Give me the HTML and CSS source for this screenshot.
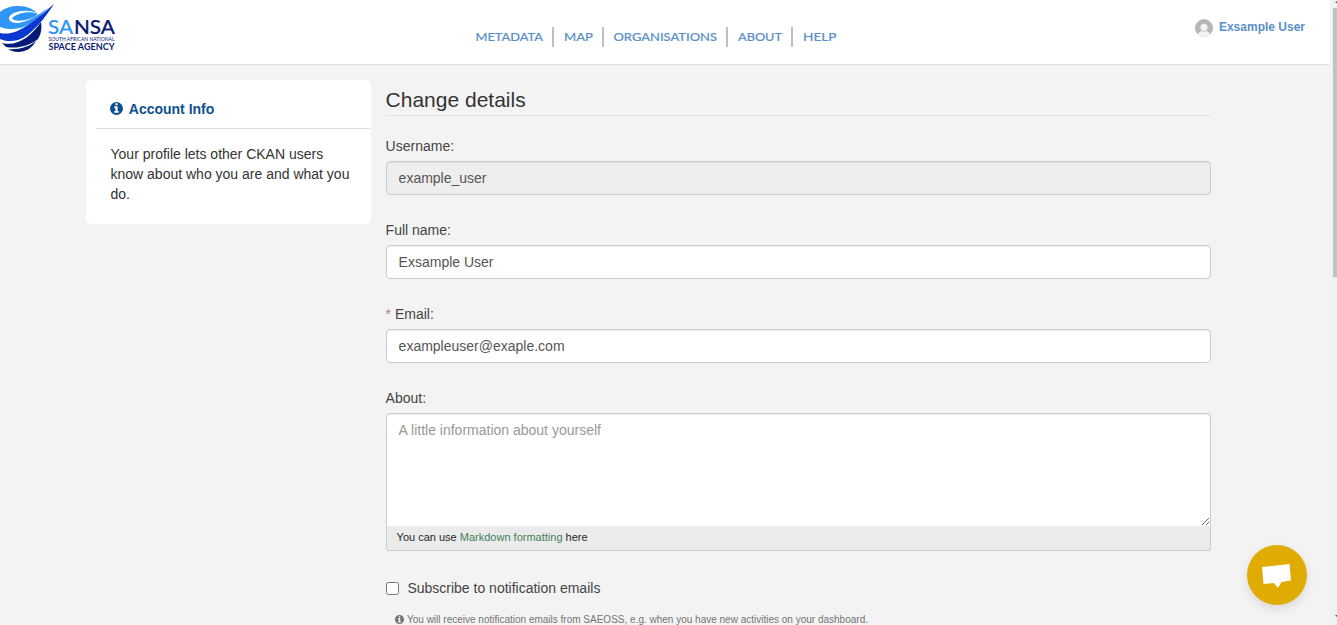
FILE: index.html
```html
<!DOCTYPE html>
<html lang="en">
<head>
<meta charset="utf-8">
<title>Change details - SANSA</title>
<link rel="stylesheet" href="styles.css">
</head>
<body>
<svg class="defs" width="0" height="0"><defs>
<symbol id="info" viewBox="0 0 1536 1536"><path fill="currentColor" fill-rule="evenodd" d="M768 0a768 768 0 1 1 0 1536a768 768 0 0 1 0-1536zM1024 1248v-160q0-14-9-23t-23-9h-96V544q0-14-9-23t-23-9H544q-14 0-23 9t-9 23v160q0 14 9 23t23 9h96v320h-96q-14 0-23 9t-9 23v160q0 14 9 23t23 9h448q14 0 23-9t9-23zM896 352V192q0-14-9-23t-23-9H672q-14 0-23 9t-9 23v160q0 14 9 23t23 9h192q14 0 23-9t9-23z"/></symbol>
</defs></svg>
<div class="page">
  <header class="header">
    <a class="logo"><svg width="120" height="56" viewBox="0 0 120 56">
      <path fill="#2f96f5" d="M0 27V12C6 7 12 6 19 6C27 6 33 9 37 13C30 10 19 10 12 14C6 18 9 23 18 23C28 22 38 15 48 8C38 18 29 26 20 28C12 30 5 29 0 27Z"/>
      <path fill="#2f96f5" d="M13 17C20 12 31 11 38 14L34 17C28 20 19 22 14 20C12 19 12 18 13 17Z"/>
      <path fill="#0837d2" d="M0 33C17 37 34 21 54 4C44 19 32 35 18 40C11 42 4 41 0 39Z"/>
      <path fill="#041b78" d="M2 43C18 47 31 36 41 22C42 29 41 34 38 39C29 46 17 49 6 47Z"/>
      <path fill="#041b78" d="M8 49C18 50 29 47 36 41C32 48 26 52 18 52C14 52 11 51 8 49Z"/>
      <g font-family="Lato, sans-serif">
      <text x="48" y="34" font-size="20" font-weight="500" fill="#2f96f5" stroke="#2f96f5" stroke-width=".2" textLength="25" lengthAdjust="spacingAndGlyphs">SA</text>
      <text x="74" y="34" font-size="20" font-weight="500" fill="#071a70" stroke="#071a70" stroke-width=".2" textLength="41" lengthAdjust="spacingAndGlyphs">NSA</text>
      <text x="48.500" y="41" font-size="5" font-weight="400" fill="#071a70" textLength="66" lengthAdjust="spacingAndGlyphs">SOUTH AFRICAN NATIONAL</text>
      <text x="48.500" y="49.700" font-size="8.500" font-weight="700" fill="#071a70" textLength="66" lengthAdjust="spacingAndGlyphs">SPACE AGENCY</text>
      </g>
    </svg></a>
    <nav class="nav">
      <a><svg width="67" height="20"><text x="-.5" y="14" textLength="67.500" lengthAdjust="spacingAndGlyphs">METADATA</text></svg></a>
      <a><svg width="29" height="20"><text x="0" y="14" textLength="29" lengthAdjust="spacingAndGlyphs">MAP</text></svg></a>
      <a><svg width="103" height="20"><text x="-.5" y="14" textLength="103.500" lengthAdjust="spacingAndGlyphs">ORGANISATIONS</text></svg></a>
      <a><svg width="44" height="20"><text x="0" y="14" textLength="44" lengthAdjust="spacingAndGlyphs">ABOUT</text></svg></a>
      <a><svg width="34" height="20"><text x="0" y="14" textLength="33.500" lengthAdjust="spacingAndGlyphs">HELP</text></svg></a>
    </nav>
    <a class="account"><svg width="18" height="18" viewBox="0 0 18 18"><clipPath id="c"><circle cx="9" cy="9" r="9"/></clipPath><g clip-path="url(#c)"><path fill="#b6b6b6" d="M0 0h18v18H0z"/><circle cx="9" cy="8.300" r="3.600" fill="#f3f3f3"/><path fill="#f3f3f3" d="M2.500 18c0-4 3-6 4-6q2.500 1 5 0c1 0 4 2 4 6z"/></g></svg>Exsample User</a>
  </header>
  <main class="main">
    <aside class="card">
      <h2><svg width="13" height="13"><use href="#info"/></svg>Account Info</h2>
      <p>Your profile lets other CKAN users know about who you are and what you do.</p>
    </aside>
    <form class="form">
      <h1>Change details</h1>
      <div class="field"><label>Username:</label><input type="text" value="example_user" readonly class="readonly"></div>
      <div class="field"><label>Full name:</label><input type="text" value="Exsample User"></div>
      <div class="field"><label><span class="req">*</span> Email:</label><input type="text" value="exampleuser@exaple.com"></div>
      <div class="field"><label>About:</label><textarea placeholder="A little information about yourself"></textarea><div class="hint">You can use <a>Markdown formatting</a> here</div></div>
      <label class="check"><input type="checkbox">Subscribe to notification emails</label>
      <div class="note"><svg width="9" height="9"><use href="#info"/></svg>You will receive notification emails from SAEOSS, e.g. when you have new activities on your dashboard.</div>
    </form>
  </main>
</div>
<div class="chat"><svg width="60" height="60" viewBox="0 0 60 60"><path fill="#fff" d="M15 22L42.500 19L44 35.500L34.500 37L31 42.800L26.500 38L16.500 39Z"/></svg></div>
<div class="scroll"><svg width="6" height="625"><path fill="#c1c1c1" d="M2 8h4v269H2z"/><path fill="#505050" d="M4 3l2-2v2zM4 615h2v2z"/></svg></div>
</body>
</html>
```
FILE: styles.css
```css
* { box-sizing: border-box; }
body {
  margin: 0;
  height: 625px;
  overflow: hidden;
  background: #f3f3f3;
  color: #444;
  font: 14px/20px "Liberation Sans", Arial, sans-serif;
}
svg { display: block; flex: none; }
.defs { position: absolute; }
.page { width: 1331px; }
.header {
  display: grid;
  grid-template-columns: 476px 1fr auto;
  align-items: start;
  height: 65px;
  width: 1330px;
  background: #fff;
  border-bottom: 1px solid #dcdfe3;
}
.nav { display: flex; padding-top: 27px; }
.nav a { display: flex; }
.nav a + a { margin-left: 9px; padding-left: 10px; border-left: 2px solid #bfbfbf; }
.nav svg { overflow: visible; }
.nav text { font: 500 12.2px Lato, sans-serif; fill: #5a8fc8; stroke: #5a8fc8; stroke-width: .15px; }
.account {
  display: flex;
  align-items: flex-start;
  gap: 5.5px;
  padding: 17px 25px 0 0;
  color: #5a8fc8;
  font-size: 12px;
  font-weight: bold;
}
.account svg { margin: 2px 0 0; }
.main { display: flex; align-items: flex-start; gap: 14.6px; padding: 15px 0 0 86px; }
.card { width: 285px; height: 144px; padding: 0 1px 0 10px; border-radius: 5px; background: #fff; }
.card h2 {
  display: flex;
  align-items: center;
  gap: 5.7px;
  height: 49px;
  margin: 0;
  padding: 9px 0 0 14.1px;
  border-bottom: 1px solid #ddd;
  color: #0d5092;
  font-size: 14px;
}
.card p { margin: 0; padding: 15px 20px 0 14.5px; color: #333; }
.form { width: 825.4px; }
.form h1 {
  height: 36px;
  margin: 0 0 20px;
  padding-top: 5px;
  border-bottom: 1px solid #e2e2e2;
  color: #333;
  font-size: 21px;
  font-weight: 400;
  line-height: 30px;
}
.field { margin-bottom: 25px; }
.field label { display: block; margin-bottom: 5px; }
.req { color: #b97c7b; }
.field input, textarea {
  display: block;
  width: 100%;
  height: 34px;
  padding: 6px 12px;
  border: 1px solid #ccc;
  border-radius: 4px;
  background: #fff;
  box-shadow: inset 0 1px 1px rgba(0, 0, 0, .075);
  color: #555;
  font: inherit;
  outline: 0;
}
.field input.readonly { background: #eee; }
textarea { height: 113px; border-bottom: 0; border-radius: 4px 4px 0 0; }
textarea::placeholder { color: #999; }
.hint {
  height: 25px;
  padding: 1px 10px;
  border: 1px solid #ccc;
  border-top: 0;
  border-radius: 0 0 3px 3px;
  background: #ebebeb;
  color: #282828;
  font-size: 11px;
}
.hint a { color: #3f8058; }
.check { display: flex; align-items: center; gap: 8.8px; margin-top: 27px; }
.check input { width: 13px; height: 13px; margin: 1px 0 0; }
.note { display: flex; align-items: center; gap: 3px; margin: 12px 0 0 9.4px; color: #737373; font-size: 10px; white-space: nowrap; }
.note svg { margin-top: -1px; }
.chat {
  position: absolute;
  left: 1247px;
  top: 545px;
  border-radius: 50%;
  background: #e0ac04;
  box-shadow: 0 4px 10px rgba(0, 0, 0, .1);
}
.scroll { position: absolute; top: 0; right: 0; background: #f1f1f1; }
```
